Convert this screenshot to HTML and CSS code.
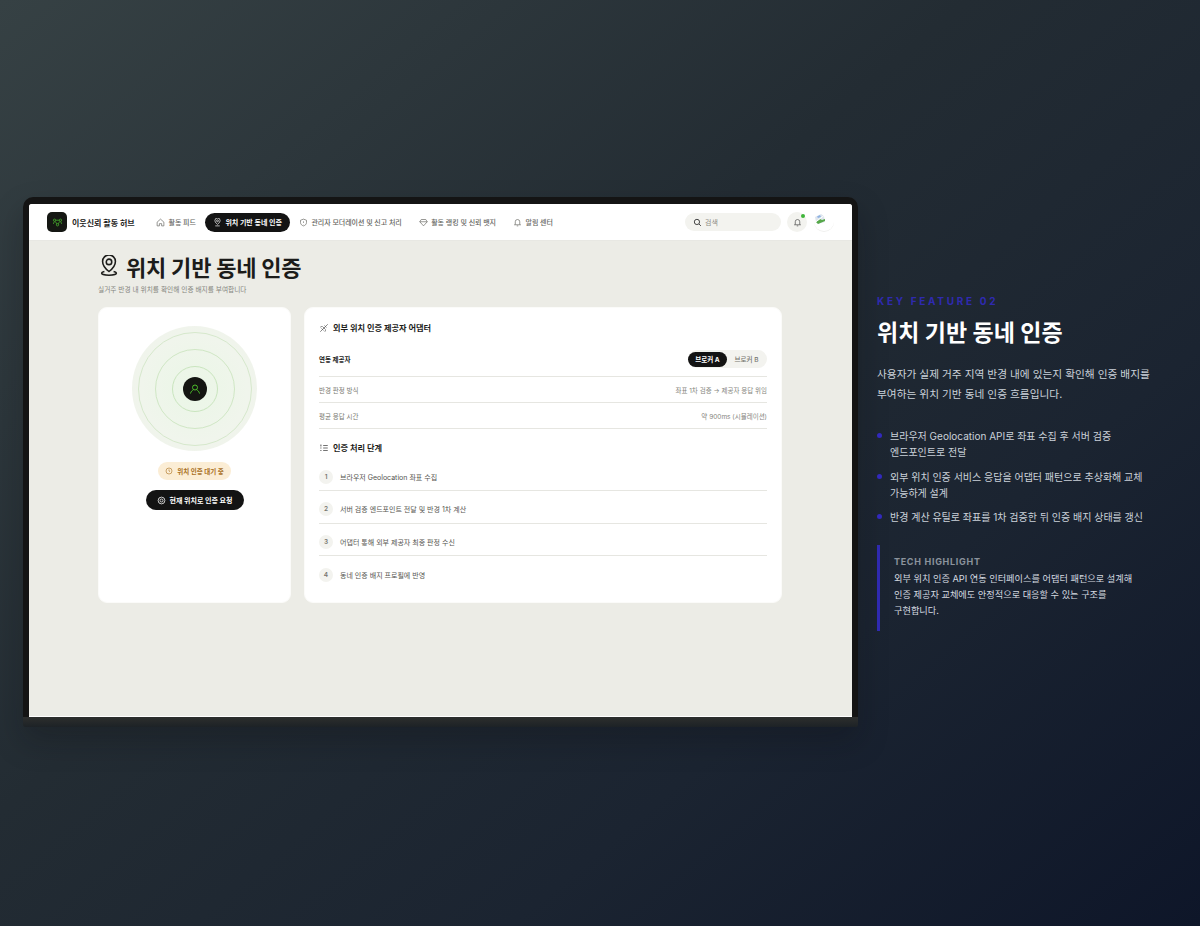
FILE: index.html
```html
<!DOCTYPE html>
<html lang="ko">
<head>
    <meta charset="UTF-8">
    <title>위치 기반 동네 인증</title>
    <link rel="stylesheet" href="styles.css">
</head>
<body>
    <div class="stage">
        <!-- App screenshot frame -->
        <div class="device">
            <div class="screen">
                <header class="topbar">
                    <div class="brand">
                        <span class="logo">
                            <svg viewBox="0 0 24 24" width="11" height="11" fill="none" stroke="#45a82c" stroke-width="1.800">
                                <circle cx="5.500" cy="7" r="2.500"/>
                                <circle cx="18.500" cy="7" r="2.500"/>
                                <circle cx="12" cy="17" r="2.500"/>
                                <path d="M8 7h8M7 9.500l3.500 5.500M17 9.500L13.500 15M3 15l2-5M21 15l-2-5"/>
                            </svg>
                        </span>
                        <span class="brand-name">이웃신뢰 활동 허브</span>
                    </div>
                    <nav class="nav">
                        <a class="nav-item">
                            <svg viewBox="0 0 24 24" width="9" height="9" fill="none" stroke="currentColor" stroke-width="1.800"><path d="M3 11l9-8 9 8v10h-6v-6H9v6H3z"/></svg>
                            활동 피드
                        </a>
                        <a class="nav-item active">
                            <svg viewBox="0 0 24 24" width="9" height="9" fill="none" stroke="currentColor" stroke-width="1.800"><path d="M12 17s7-5 7-10a7 7 0 0 0-14 0c0 5 7 10 7 10z"/><circle cx="12" cy="7.500" r="2.500"/><path d="M6 21h12"/></svg>
                            위치 기반 동네 인증
                        </a>
                        <a class="nav-item">
                            <svg viewBox="0 0 24 24" width="9" height="9" fill="none" stroke="currentColor" stroke-width="1.800"><path d="M12 3l8 3v6c0 5-4 8-8 9-4-1-8-4-8-9V6z"/><path d="M12 9v4M12 16v.5"/></svg>
                            관리자 모더레이션 및 신고 처리
                        </a>
                        <a class="nav-item">
                            <svg viewBox="0 0 24 24" width="9" height="9" fill="none" stroke="currentColor" stroke-width="1.800"><path d="M6 4h12l4 6-10 11L2 10z"/><path d="M2 10h20"/></svg>
                            활동 랭킹 및 신뢰 뱃지
                        </a>
                        <a class="nav-item">
                            <svg viewBox="0 0 24 24" width="9" height="9" fill="none" stroke="currentColor" stroke-width="1.800"><path d="M6 17V10a6 6 0 0 1 12 0v7l2 1H4z"/><path d="M10 21h4"/></svg>
                            알림 센터
                        </a>
                    </nav>
                    <div class="tools">
                        <div class="search">
                            <svg viewBox="0 0 24 24" width="9" height="9" fill="none" stroke="#333" stroke-width="2.400"><circle cx="10.500" cy="10.500" r="7"/><path d="M16 16l5 5"/></svg>
                            <span>검색</span>
                        </div>
                        <div class="bell">
                            <svg viewBox="0 0 24 24" width="9" height="9" fill="none" stroke="#444" stroke-width="1.800"><path d="M6 17V10a6 6 0 0 1 12 0v7l2 1H4z"/><path d="M10 21h4"/></svg>
                            <span class="bell-dot"></span>
                        </div>
                        <div class="avatar">
                            <svg viewBox="0 0 12 12" width="12" height="12">
                                <path d="M1 4l6-3 3 2 1 6-7 2-2-2z" fill="#dfe6ee"/>
                                <path d="M2 9l4-3 2 1 3-1v2l-7 3z" fill="#57a84a"/>
                                <path d="M3 3.500l3-1.500 1 2-3 1z" fill="#8fb2e2"/>
                                <path d="M1 9.500l9-7" stroke="#fff" stroke-width="1"/>
                            </svg>
                        </div>
                    </div>
                </header>

                <main class="page">
                    <h1 class="page-title">
                        <svg viewBox="0 0 24 24" width="22" height="22" fill="none" stroke="#1c1c1a" stroke-width="1.700"><path d="M12 18s7-5.500 7-11a7 7 0 0 0-14 0c0 5.500 7 11 7 11z"/><circle cx="12" cy="7.500" r="3"/><path d="M7 18c-2 .5-3 1.200-3 2 0 1 3 2 8 2s8-1 8-2c0-.8-1-1.500-3-2"/></svg>
                        위치 기반 동네 인증
                    </h1>
                    <p class="page-sub">실거주 반경 내 위치를 확인해 인증 배지를 부여합니다</p>

                    <div class="cards">
                        <section class="card radar-card">
                            <div class="radar">
                                <span class="ring ring-bg"></span>
                                <span class="ring ring-1"></span>
                                <span class="ring ring-2"></span>
                                <span class="ring ring-3"></span>
                                <span class="pin">
                                    <svg viewBox="0 0 24 24" width="12" height="12" fill="none" stroke="#4fc52c" stroke-width="1.900"><circle cx="12" cy="9" r="5"/><path d="M3 21c1-4 3-6 5.500-7M21 21c-1-4-3-6-5.500-7"/></svg>
                                </span>
                            </div>
                            <div class="status">
                                <svg viewBox="0 0 24 24" width="8" height="8" fill="none" stroke="#b07a2e" stroke-width="2"><circle cx="12" cy="12" r="9"/><path d="M12 7v5l3 2"/></svg>
                                위치 인증 대기 중
                            </div>
                            <button class="request-btn">
                                <svg viewBox="0 0 24 24" width="9" height="9" fill="none" stroke="#fff" stroke-width="2"><circle cx="12" cy="12" r="9"/><circle cx="12" cy="12" r="4"/></svg>
                                현재 위치로 인증 요청
                            </button>
                        </section>

                        <section class="card detail-card">
                            <h2 class="card-title">
                                <svg viewBox="0 0 24 24" width="10" height="10" fill="none" stroke="#555" stroke-width="1.700"><path d="M3 21L21 3M8 8l8 8M6 13l5 5M13 6l5 5M3 10l4-2M14 21l2-4"/></svg>
                                외부 위치 인증 제공자 어댑터
                            </h2>
                            <div class="row row-first">
                                <span class="row-label strong">연동 제공자</span>
                                <div class="toggle">
                                    <span class="toggle-item on">브로커 A</span>
                                    <span class="toggle-item">브로커 B</span>
                                </div>
                            </div>
                            <div class="row">
                                <span class="row-label">반경 판정 방식</span>
                                <span class="row-value">좌표 1차 검증 → 제공자 응답 위임</span>
                            </div>
                            <div class="row">
                                <span class="row-label">평균 응답 시간</span>
                                <span class="row-value">약 900ms (시뮬레이션)</span>
                            </div>

                            <h2 class="card-title steps-title">
                                <svg viewBox="0 0 24 24" width="10" height="10" fill="none" stroke="#555" stroke-width="2"><path d="M10 6h11M10 12h11M10 18h11M3 5h3M3 7h3M3 12h3M3 18h3"/></svg>
                                인증 처리 단계
                            </h2>
                            <ol class="steps">
                                <li class="step"><span class="step-num">1</span>브라우저 Geolocation 좌표 수집</li>
                                <li class="step"><span class="step-num">2</span>서버 검증 엔드포인트 전달 및 반경 1차 계산</li>
                                <li class="step"><span class="step-num">3</span>어댑터 통해 외부 제공자 최종 판정 수신</li>
                                <li class="step"><span class="step-num">4</span>동네 인증 배지 프로필에 반영</li>
                            </ol>
                        </section>
                    </div>
                </main>
            </div>
        </div>

        <!-- Feature description -->
        <aside class="feature">
            <p class="eyebrow">KEY FEATURE 02</p>
            <h2 class="feature-title">위치 기반 동네 인증</h2>
            <p class="feature-desc">사용자가 실제 거주 지역 반경 내에 있는지 확인해 인증 배지를 부여하는 위치 기반 동네 인증 흐름입니다.</p>
            <ul class="feature-list">
                <li>브라우저 Geolocation API로 좌표 수집 후 서버 검증 엔드포인트로 전달</li>
                <li>외부 위치 인증 서비스 응답을 어댑터 패턴으로 추상화해 교체 가능하게 설계</li>
                <li>반경 계산 유틸로 좌표를 1차 검증한 뒤 인증 배지 상태를 갱신</li>
            </ul>
            <div class="highlight">
                <p class="highlight-label">TECH HIGHLIGHT</p>
                <p class="highlight-text">외부 위치 인증 API 연동 인터페이스를 어댑터 패턴으로 설계해 인증 제공자 교체에도 안정적으로 대응할 수 있는 구조를 구현합니다.</p>
            </div>
        </aside>
    </div>
</body>
</html>
```

FILE: styles.css
```css
* {
    box-sizing: border-box;
}

html, body {
    margin: 0;
    height: 926px;
    overflow: hidden;
}

body {
    font-family: Inter, "Noto Sans CJK KR", sans-serif;
    background: linear-gradient(140deg, #364144 0%, #232c33 42%, #1b2431 70%, #0e1629 100%);
    color: #1c1c1a;
}

.stage {
    height: 926px;
    padding-left: 23px;
    display: flex;
    align-items: center;
    gap: 19px;
}

/* Device frame */
.device {
    width: 835px;
    flex-shrink: 0;
    margin-bottom: 2px;
    padding: 7px 6px 10px;
    background: linear-gradient(#141414 98.100%, #2c2e2d 98.200%, #1d2226 100%);
    border-radius: 10px 10px 2px 2px;
    box-shadow: 0 14px 30px rgba(10, 12, 16, 0.25);
}

.screen {
    height: 513px;
    background: #ecece6;
    border-radius: 3px 3px 0 0;
    overflow: hidden;
    border-bottom: 1px solid #fff;
}

/* Top bar */
.topbar {
    height: 37px;
    background: #fff;
    display: flex;
    align-items: center;
    padding: 0 18px;
    border-bottom: 1px solid #e8e8e3;
}

.brand {
    display: flex;
    align-items: center;
    gap: 5px;
    width: 101px;
    flex-shrink: 0;
}

.logo {
    width: 20px;
    height: 20px;
    border-radius: 5px;
    background: #151713;
    display: flex;
    align-items: center;
    justify-content: center;
}

.brand-name {
    font-size: 8px;
    font-weight: 700;
    white-space: nowrap;
}

.nav {
    display: flex;
    align-items: center;
    gap: 1px;
}

.nav-item {
    display: flex;
    align-items: center;
    gap: 3.500px;
    height: 19px;
    padding: 0 8px;
    font-size: 7px;
    font-weight: 500;
    letter-spacing: -0.05px;
    color: #66665f;
    white-space: nowrap;
    border-radius: 10px;
}

.nav-item.active {
    background: #131313;
    color: #fff;
    font-weight: 700;
    letter-spacing: 0;
}

.tools {
    margin-left: auto;
    display: flex;
    align-items: center;
    gap: 6px;
}

.search {
    width: 96px;
    height: 18px;
    border-radius: 9px;
    background: #f3f3ef;
    display: flex;
    align-items: center;
    gap: 3px;
    padding: 0 8px;
    font-size: 7px;
    color: #8c8c85;
}

.bell {
    width: 20px;
    height: 20px;
    border-radius: 50%;
    background: #f3f3ef;
    display: flex;
    align-items: center;
    justify-content: center;
    position: relative;
}

.bell-dot {
    position: absolute;
    top: 2px;
    right: 2px;
    width: 4px;
    height: 4px;
    border-radius: 50%;
    background: #3fb53a;
}

.avatar {
    width: 20px;
    height: 20px;
    margin-left: 1px;
    border-radius: 50%;
    border-bottom: 1px solid #f0f0ee;
    display: flex;
    align-items: flex-start;
    padding-top: 1px;
}

/* Page */
.page {
    padding: 11px 70px 0 69px;
}

.page-title {
    margin: 0;
    display: flex;
    align-items: center;
    gap: 6px;
    height: 28px;
    font-size: 22px;
    font-weight: 700;
    letter-spacing: -0.2px;
}

.page-sub {
    margin: 4px 0 0;
    font-size: 6.700px;
    line-height: 12px;
    color: #85857e;
}

.cards {
    display: flex;
    gap: 13px;
    margin-top: 11px;
}

.card {
    height: 296px;
    background: #fff;
    border-radius: 9px;
    border: 1px solid #fbfbf9;
}

.radar-card {
    width: 193px;
    flex-shrink: 0;
    display: flex;
    flex-direction: column;
    align-items: center;
    padding-top: 18px;
}

.radar {
    display: grid;
    place-items: center;
    width: 125px;
    height: 125px;
}

.radar > * {
    grid-area: 1 / 1;
}

.ring {
    border-radius: 50%;
}

.ring-bg {
    width: 125px;
    height: 125px;
    background: radial-gradient(circle, #eaf6e6 0%, #f0f5ec 60%, #f0f1eb 100%);
}

.ring-1 {
    width: 114px;
    height: 114px;
    border: 1px solid #d6e8cc;
}

.ring-2 {
    width: 80px;
    height: 80px;
    border: 1px solid #d0e7c5;
}

.ring-3 {
    width: 46px;
    height: 46px;
    border: 1px solid #c9e5be;
}

.pin {
    width: 24px;
    height: 24px;
    border-radius: 50%;
    background: #141512;
    display: flex;
    align-items: center;
    justify-content: center;
}

.status {
    margin-top: 11px;
    height: 18px;
    width: 73px;
    border-radius: 9px;
    background: #fbedd5;
    color: #a9701f;
    font-size: 6.500px;
    font-weight: 700;
    display: flex;
    align-items: center;
    justify-content: center;
    gap: 4px;
    white-space: nowrap;
}

.request-btn {
    margin-top: 10px;
    width: 98px;
    height: 20px;
    border: none;
    border-radius: 10px;
    background: #131313;
    color: #fff;
    font-family: inherit;
    font-size: 7px;
    font-weight: 700;
    display: flex;
    align-items: center;
    justify-content: center;
    gap: 4px;
    white-space: nowrap;
    padding: 0;
}

.detail-card {
    flex: 1;
    padding: 13px 14px 14px;
}

.card-title {
    margin: 0;
    display: flex;
    align-items: center;
    gap: 4px;
    font-size: 8.200px;
    font-weight: 700;
    line-height: 14px;
}

.row {
    display: flex;
    align-items: center;
    justify-content: space-between;
    height: 26px;
    border-bottom: 1px solid #e6e6e1;
    font-size: 6.500px;
}

.row-first {
    height: 35px;
    margin-top: 7px;
}

.row-label {
    color: #77776f;
}

.row-label.strong {
    color: #1c1c1a;
    font-weight: 700;
}

.row-value {
    color: #85857e;
}

.toggle {
    display: flex;
    width: 79px;
    height: 18px;
    border-radius: 9px;
    background: #f3f3ef;
}

.toggle-item {
    width: 39px;
    border-radius: 9px;
    display: flex;
    align-items: center;
    justify-content: center;
    color: #77776f;
    font-size: 6.500px;
    font-weight: 500;
    white-space: nowrap;
}

.toggle-item.on {
    height: 15px;
    margin-top: 1.500px;
    background: #131313;
    color: #fff;
    font-weight: 700;
}

.steps-title {
    margin-top: 12px;
}

.steps {
    list-style: none;
    margin: 3.500px 0 0;
    padding: 0;
}

.step {
    height: 32.500px;
    padding-top: 5px;
    display: flex;
    align-items: center;
    gap: 7px;
    font-size: 7px;
    color: #55554f;
    border-bottom: 1px solid #e6e6e1;
}

.step:last-child {
    border-bottom: none;
}

.step-num {
    width: 14px;
    height: 14px;
    border-radius: 50%;
    background: #f3f3ef;
    display: flex;
    align-items: center;
    justify-content: center;
    font-size: 6.500px;
    font-weight: 600;
    color: #77776f;
}

/* Right column */
.feature {
    width: 280px;
    flex-shrink: 0;
    color: #cbd2da;
    word-break: keep-all;
}

.eyebrow {
    margin: 0;
    font-size: 10px;
    line-height: 12px;
    font-weight: 700;
    letter-spacing: 2.700px;
    color: #2f2ab0;
}

.feature-title {
    margin: 10px 0 0;
    font-size: 23px;
    line-height: 32px;
    font-weight: 700;
    color: #fff;
}

.feature-desc {
    margin: 16px 0 0;
    font-size: 10.700px;
    line-height: 20px;
}

.feature-list {
    list-style: none;
    margin: 23px 0 0;
    padding: 0;
    font-size: 10px;
    line-height: 16px;
}

.feature-list li {
    position: relative;
    padding-left: 13px;
    margin-bottom: 8.500px;
    width: 270px;
}

.feature-list li::before {
    content: "";
    position: absolute;
    left: 0;
    top: 5px;
    width: 5px;
    height: 5px;
    border-radius: 50%;
    background: #3229bd;
}

.highlight {
    margin-top: 20px;
    padding: 11px 0 12px 14px;
    border-left: 3px solid #2f2ab0;
    width: 260px;
}

.highlight-label {
    margin: 0;
    font-size: 9px;
    line-height: 12px;
    font-weight: 700;
    letter-spacing: 0.700px;
    color: #8b939d;
}

.highlight-text {
    margin: 3px 0 0;
    font-size: 9.200px;
    line-height: 16px;
    color: #d5dae0;
}
```
